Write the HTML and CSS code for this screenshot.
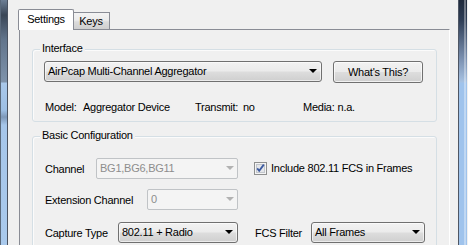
FILE: index.html
```html
<!DOCTYPE html>
<html>
<head>
<meta charset="utf-8">
<link rel="stylesheet" href="styles.css">
</head>
<body>
<div class="window">
  <div class="frame frame-left"></div>
  <div class="client">
    <div class="tabs">
      <div class="tab tab-active">Settings</div>
      <div class="tab tab-keys">Keys</div>
    </div>
    <div class="page">
      <div class="group group-iface">
        <span class="gtitle">Interface</span>
        <div class="iface-row">
          <div class="combo combo-iface">AirPcap Multi-Channel Aggregator<span class="arrow"></span></div>
          <div class="btn">What's This?</div>
        </div>
        <div class="info">
          <div class="info-item"><span class="info-lab lab-model">Model:</span><span>Aggregator Device</span></div>
          <div class="info-item"><span class="info-lab lab-transmit">Transmit:</span><span>no</span></div>
          <div class="info-item"><span class="info-lab lab-media">Media:</span><span>n.a.</span></div>
        </div>
      </div>
      <div class="group group-basic">
        <span class="gtitle">Basic Configuration</span>
        <div class="crow crow-channel">
          <span class="clabel lab-channel">Channel</span>
          <div class="combo combo-dis combo-channel">BG1,BG6,BG11<span class="arrow arrow-dis"></span></div>
          <span class="check">
            <svg width="13" height="13" viewBox="0 0 13 13">
              <rect x="0.5" y="0.5" width="12" height="12" fill="#f4f4f4" stroke="#8e8f8f"/>
              <rect x="2.5" y="2.5" width="8" height="8" fill="#e4e6ea" stroke="#c2c6cc"/>
              <path d="M3.2 6.4 L5.2 8.8 L9.8 2.6" fill="none" stroke="#3c5aa0" stroke-width="1.8"/>
            </svg>
          </span>
          <span class="check-label">Include 802.11 FCS in Frames</span>
        </div>
        <div class="crow crow-ext">
          <span class="clabel lab-ext">Extension Channel</span>
          <div class="combo combo-dis combo-ext">0<span class="arrow arrow-dis"></span></div>
        </div>
        <div class="crow crow-cap">
          <span class="clabel lab-cap">Capture Type</span>
          <div class="combo combo-cap">802.11 + Radio<span class="arrow"></span></div>
          <span class="clabel lab-fcs">FCS Filter</span>
          <div class="combo combo-fcs">All Frames<span class="arrow"></span></div>
        </div>
      </div>
    </div>
  </div>
  <div class="frame frame-right"></div>
</div>
</body>
</html>
```
FILE: styles.css
```css
html, body {
  margin: 0;
  padding: 0;
  width: 468px;
  height: 245px;
  overflow: hidden;
  background: #f0f0f0;
  font-family: "Liberation Sans", Arial, sans-serif;
  font-size: 11px;
  letter-spacing: -0.25px;
  color: #000;
}

.window {
  display: flex;
  height: 245px;
  overflow: hidden;
}

.frame-left {
  width: 7px;
  flex: none;
  border-right: 1px solid #4a5260;
  background:
    linear-gradient(to right, #5b6a7c 0, #5b6a7c 1px, transparent 1px),
    linear-gradient(to bottom, #6d7f95 0, #3a4656 15px, #62758c 40px, #7f93ab 82px, #a9c8ea 83px, #9ebfe4 110px, #7e98b8 117px, #a6c6ea 125px, #a9c9ec 245px);
}

.frame-right {
  width: 8px;
  flex: none;
  border-left: 1px solid #4e5664;
  background:
    linear-gradient(to right, transparent 0, transparent 5px, rgba(255,255,255,0.35) 5px, rgba(255,255,255,0.35) 7px, transparent 7px),
    linear-gradient(to bottom, #1f2a3c 0, #2e3d55 20px, #7d93b3 60px, #a7c2e2 82px, #9fc3ec 83px, #9fc3ec 245px);
}

.client {
  width: 450px;
  flex: none;
  padding: 9px 0 0 10px;
  box-sizing: border-box;
  background: #f0f0f0;
}

/* Tabs */
.tabs {
  display: flex;
  align-items: flex-end;
  height: 20px;
}

.tab {
  box-sizing: border-box;
  border: 1px solid #898c95;
  border-bottom: none;
  display: flex;
  justify-content: center;
  align-items: center;
  line-height: 13px;
}

.tab-active {
  position: relative;
  z-index: 1;
  width: 56px;
  height: 21px;
  margin-bottom: -1px;
  background: #fff;
  border-radius: 2px 2px 0 0;
  padding-bottom: 1px;
}

.tab-keys {
  width: 37px;
  height: 17px;
  margin-left: -1px;
  border-left: none;
  background: linear-gradient(to bottom, #f3f3f3 0, #ebebeb 45%, #dcdcdc 55%, #cfcfcf 100%);
  padding-top: 1px;
}

.page {
  margin-left: 1px;
  width: 431px;
  height: 216px;
  box-sizing: border-box;
  border-left: 1px solid #898c95;
  border-top: 1px solid #898c95;
  border-right: 1px solid #ffffff;
  background: #f0f0f0;
  padding: 0 12px;
  display: flex;
  flex-direction: column;
  overflow: hidden;
}

/* Group boxes */
.group {
  position: relative;
  box-sizing: border-box;
  width: 405px;
  flex: none;
  border: 1px solid #d5dfe5;
  border-radius: 3px;
  box-shadow: inset 1px 1px 0 #fbfbfb;
  padding-left: 11px;
}

.gtitle {
  position: absolute;
  top: -8px;
  left: 7px;
  padding: 0 2px;
  background: #f0f0f0;
  line-height: 13px;
}

.group-iface {
  margin-top: 19px;
  height: 73px;
  padding-top: 11px;
}

.group-basic {
  margin-top: 14px;
  height: 130px;
  padding-top: 21px;
}

.iface-row {
  display: flex;
  align-items: flex-start;
  height: 22px;
}

/* Combos */
.combo {
  position: relative;
  box-sizing: border-box;
  height: 21px;
  border: 1px solid #707070;
  border-radius: 3px;
  padding-left: 3px;
  line-height: 19px;
  background: linear-gradient(to bottom, #f2f2f2 0, #ebebeb 48%, #dddddd 52%, #cfcfcf 100%);
  box-shadow: inset 0 0 0 1px rgba(255,255,255,0.6);
  white-space: nowrap;
}

.arrow {
  position: absolute;
  right: 4px;
  top: 7px;
  width: 0;
  height: 0;
  border-left: 4px solid transparent;
  border-right: 4px solid transparent;
  border-top: 4px solid #000;
}

.combo-dis {
  border-color: #c0c3c6;
  background: #f4f4f4;
  box-shadow: none;
  color: #8d8d8d;
  border-radius: 2px;
}

.arrow-dis {
  border-top-color: #b2b2b2;
  right: 3px;
}

.combo-iface {
  width: 278px;
}

.btn {
  box-sizing: border-box;
  margin-left: 11px;
  width: 90px;
  height: 22px;
  border: 1px solid #707070;
  border-radius: 3px;
  background: linear-gradient(to bottom, #f2f2f2 0, #ebebeb 48%, #dddddd 52%, #cfcfcf 100%);
  box-shadow: inset 0 0 0 1px rgba(255,255,255,0.7);
  display: flex;
  align-items: center;
  justify-content: center;
  line-height: 13px;
}

.info {
  margin-top: 18px;
  padding-left: 1px;
  display: grid;
  grid-template-columns: 150px 108px 1fr;
  line-height: 13px;
  white-space: nowrap;
}

.info-item {
  display: flex;
}

.info-lab {
  flex: none;
}

.lab-model { width: 38px; }
.lab-transmit { width: 48px; }
.lab-media { margin-right: 3px; }

/* Basic config rows */
.crow {
  display: flex;
  align-items: center;
  height: 21px;
}

.crow-ext {
  margin-top: 10px;
}

.crow-cap {
  margin-top: 12px;
}

.clabel {
  box-sizing: border-box;
  padding-left: 1px;
  line-height: 13px;
  white-space: nowrap;
  padding-top: 2px;
}

.lab-channel { width: 52px; }
.lab-ext { width: 103px; }
.lab-cap { width: 74px; }
.lab-fcs { width: 57px; margin-left: 16px; }

.combo-channel { width: 142px; }
.combo-ext { width: 91px; }
.combo-cap { width: 120px; }
.combo-fcs { width: 114px; }

.check {
  margin-left: 16px;
  width: 13px;
  height: 13px;
  display: flex;
}

.check-label {
  margin-left: 4px;
  line-height: 13px;
  white-space: nowrap;
}
```
